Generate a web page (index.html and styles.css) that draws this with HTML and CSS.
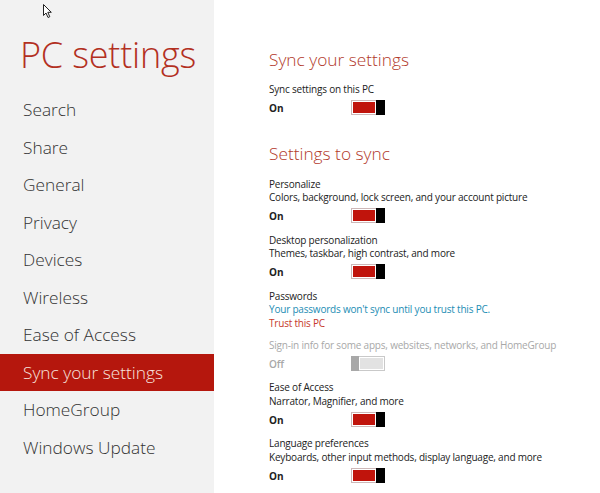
FILE: index.html
```html
<!DOCTYPE html>
<html lang="en">
<head>
<meta charset="utf-8">
<title>PC settings</title>
<link rel="stylesheet" href="styles.css">
</head>
<body>
<div class="app">
  <aside class="sidebar">
    <h1 class="title">PC settings</h1>
    <nav class="nav">
      <div class="nav-item">Search</div>
      <div class="nav-item">Share</div>
      <div class="nav-item">General</div>
      <div class="nav-item">Privacy</div>
      <div class="nav-item">Devices</div>
      <div class="nav-item">Wireless</div>
      <div class="nav-item">Ease of Access</div>
      <div class="nav-item active">Sync your settings</div>
      <div class="nav-item">HomeGroup</div>
      <div class="nav-item">Windows Update</div>
    </nav>
  </aside>
  <main class="content">
    <h2 class="heading first">Sync your settings</h2>
    <div class="setting">
      <div class="label">Sync settings on this PC</div>
      <div class="state"><span class="state-text">On</span><span class="toggle on"><span class="track"></span><span class="thumb"></span></span></div>
    </div>

    <h2 class="heading second">Settings to sync</h2>
    <div class="setting">
      <div class="label">Personalize</div>
      <div class="label">Colors, background, lock screen, and your account picture</div>
      <div class="state"><span class="state-text">On</span><span class="toggle on"><span class="track"></span><span class="thumb"></span></span></div>
    </div>
    <div class="setting">
      <div class="label">Desktop personalization</div>
      <div class="label">Themes, taskbar, high contrast, and more</div>
      <div class="state"><span class="state-text">On</span><span class="toggle on"><span class="track"></span><span class="thumb"></span></span></div>
    </div>
    <div class="setting passwords">
      <div class="label">Passwords</div>
      <div class="label info">Your passwords won't sync until you trust this PC.</div>
      <div class="label link">Trust this PC</div>
    </div>
    <div class="setting disabled">
      <div class="label">Sign-in info for some apps, websites, networks, and HomeGroup</div>
      <div class="state"><span class="state-text">Off</span><span class="toggle off"><span class="thumb"></span><span class="track"></span></span></div>
    </div>
    <div class="setting">
      <div class="label">Ease of Access</div>
      <div class="label">Narrator, Magnifier, and more</div>
      <div class="state"><span class="state-text">On</span><span class="toggle on"><span class="track"></span><span class="thumb"></span></span></div>
    </div>
    <div class="setting">
      <div class="label">Language preferences</div>
      <div class="label">Keyboards, other input methods, display language, and more</div>
      <div class="state"><span class="state-text">On</span><span class="toggle on"><span class="track"></span><span class="thumb"></span></span></div>
    </div>
  </main>
</div>
<svg class="cursor" width="10" height="15" viewBox="0 0 10 15" aria-hidden="true">
  <path d="M0.5 0.5 L0.5 11.5 L3 9 L5 13.5 L6.8 12.7 L4.8 8.3 L8.3 8.3 Z" fill="#fff" stroke="#222" stroke-width="1" stroke-linejoin="round"/>
</svg>
</body>
</html>
```

FILE: styles.css
```css
html, body {
  margin: 0;
  padding: 0;
  background: #ffffff;
}
body {
  font-family: "Open Sans", "Noto Sans", sans-serif;
  color: #222;
  width: 600px;
  height: 493px;
  overflow: hidden;
  position: relative;
}
.app {
  display: flex;
  height: 493px;
}
.sidebar {
  width: 214px;
  flex: 0 0 214px;
  background: #f2f2f2;
  display: flex;
  flex-direction: column;
}
.title {
  margin: 0;
  padding: 27px 0 0 20px;
  height: 64px;
  font-size: 36px;
  line-height: 56px;
  font-weight: 300;
  color: #b3301f;
  white-space: nowrap;
  letter-spacing: -0.2px;
}
.nav {
  display: flex;
  flex-direction: column;
}
.nav-item {
  height: 37.5px;
  line-height: 37.5px;
  padding-left: 23px;
  font-size: 17.3px;
  font-weight: 300;
  color: #333;
}
.nav-item.active {
  background: #b5170d;
  color: #f7e3df;
}
.content {
  flex: 1;
  padding-left: 55px;
}
.heading {
  margin: 0;
  font-size: 17.3px;
  line-height: 26px;
  font-weight: 300;
  color: #b2392b;
}
.heading.first {
  margin-top: 47px;
  margin-bottom: 10px;
}
.heading.second {
  margin-top: 25px;
  margin-bottom: 11px;
}
.setting {
  margin-bottom: 10px;
}
.setting.passwords {
  margin-bottom: 9px;
}
.setting.disabled {
  margin-bottom: 9.5px;
}
.label {
  font-size: 10px;
  line-height: 13.5px;
  letter-spacing: -0.2px;
  color: #222;
  white-space: nowrap;
}
.label.info {
  color: #1c8db4;
}
.label.link {
  color: #c6392a;
}
.disabled .label,
.disabled .state-text {
  color: #a8a8a8;
}
.state {
  display: flex;
  align-items: center;
  height: 16px;
  margin-top: 3px;
}
.state-text {
  width: 82px;
  font-size: 10px;
  font-weight: 700;
  color: #222;
  padding-top: 1px;
}
.disabled .state-text {
  font-weight: 600;
}
.toggle {
  display: flex;
  width: 34px;
  height: 15px;
}
.toggle .track {
  flex: 1;
  border: 1px solid #cdb8b8;
  padding: 1px;
  background: #c0140c;
  background-clip: content-box;
}
.toggle.on .track {
  border-right: none;
}
.toggle.on .thumb {
  width: 9px;
  background: #000;
}
.toggle.off .track {
  border-color: #c9c9c9;
  border-left: none;
  background: #e2e2e2;
  background-clip: content-box;
}
.toggle.off .thumb {
  width: 8px;
  background: #a8a8a8;
}
.cursor {
  position: absolute;
  left: 43px;
  top: 4px;
}
```
